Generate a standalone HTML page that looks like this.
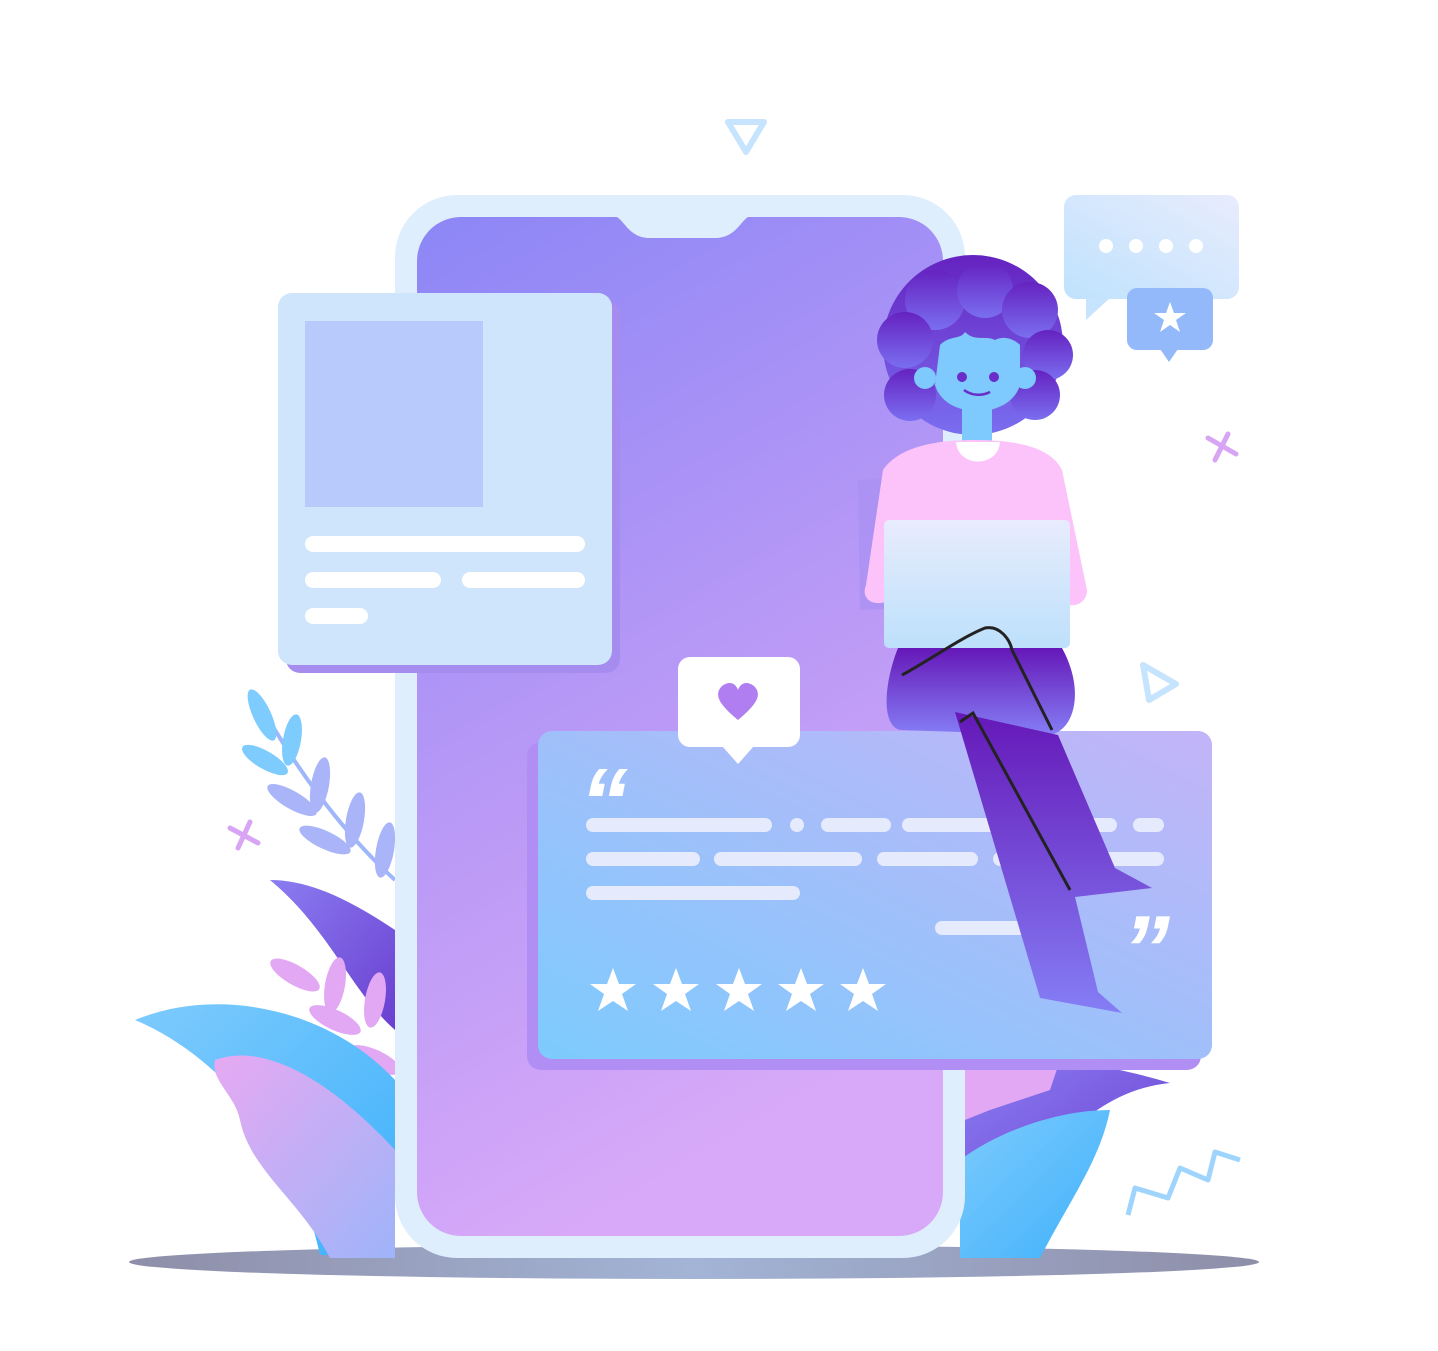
<!DOCTYPE html>
<html><head><meta charset="utf-8"><style>html,body{margin:0;padding:0;background:#fff}svg{display:block}</style></head>
<body>
<svg width="1438" height="1351" viewBox="0 0 1438 1351" xmlns="http://www.w3.org/2000/svg">
<defs>
<linearGradient id="scr" x1="0" y1="0" x2="0.3" y2="1"><stop offset="0" stop-color="#8c86f6"/><stop offset="0.5" stop-color="#b497f6"/><stop offset="1" stop-color="#d8a9f8"/></linearGradient>
<linearGradient id="rev" x1="0" y1="1" x2="1" y2="0"><stop offset="0" stop-color="#7dcbfd"/><stop offset="1" stop-color="#c3b4f8"/></linearGradient>
<linearGradient id="shd" x1="0" y1="0" x2="1" y2="0"><stop offset="0" stop-color="#8e8ea8"/><stop offset="0.5" stop-color="#a3b4d6"/><stop offset="1" stop-color="#8e8ea8"/></linearGradient>
<linearGradient id="hair" x1="0" y1="0" x2="0" y2="1"><stop offset="0" stop-color="#6522c0"/><stop offset="1" stop-color="#7a6ef0"/></linearGradient>
<linearGradient id="leg" x1="0" y1="0" x2="0" y2="1"><stop offset="0" stop-color="#6518b8"/><stop offset="1" stop-color="#857ef5"/></linearGradient>
<linearGradient id="lap" x1="0" y1="0" x2="0" y2="1"><stop offset="0" stop-color="#e8ecfd"/><stop offset="1" stop-color="#bde0fb"/></linearGradient>
<linearGradient id="chat" x1="0" y1="1" x2="1" y2="0"><stop offset="0" stop-color="#bfe2fd"/><stop offset="1" stop-color="#e8ecfd"/></linearGradient>
<linearGradient id="pl1" x1="0" y1="0" x2="1" y2="1"><stop offset="0" stop-color="#7ecbfd"/><stop offset="1" stop-color="#3fb1fb"/></linearGradient>
<linearGradient id="pl2" x1="0" y1="0" x2="1" y2="1"><stop offset="0" stop-color="#e6a9f2"/><stop offset="1" stop-color="#9fb4f9"/></linearGradient>
<linearGradient id="pl3" x1="0" y1="0" x2="1" y2="1"><stop offset="0" stop-color="#8b7df2"/><stop offset="1" stop-color="#6a3fd0"/></linearGradient>
</defs>
<ellipse cx="694" cy="1262" rx="565" ry="17" fill="url(#shd)"/>
<!-- left plants: leafy branch -->
<path d="M258 700 C290 760 340 830 395 880" stroke="#9fb6fa" stroke-width="4" fill="none"/>
<g fill="#7ecbfd">
<ellipse cx="262" cy="715" rx="9" ry="28" transform="rotate(-25 262 715)"/>
<ellipse cx="292" cy="740" rx="9" ry="26" transform="rotate(10 292 740)"/>
<ellipse cx="265" cy="760" rx="9" ry="26" transform="rotate(-60 265 760)"/>
</g>
<g fill="#a9b5f8">
<ellipse cx="320" cy="785" rx="9" ry="28" transform="rotate(10 320 785)"/>
<ellipse cx="292" cy="800" rx="9" ry="28" transform="rotate(-60 292 800)"/>
<ellipse cx="355" cy="820" rx="9" ry="28" transform="rotate(10 355 820)"/>
<ellipse cx="325" cy="840" rx="9" ry="28" transform="rotate(-65 325 840)"/>
<ellipse cx="385" cy="850" rx="9" ry="28" transform="rotate(10 385 850)"/>
</g>
<path d="M270 880 C310 880 350 900 395 930 L395 1030 C350 990 330 930 270 880Z" fill="url(#pl3)"/>
<g fill="#e2a8f3">
<ellipse cx="295" cy="975" rx="10" ry="28" transform="rotate(-60 295 975)"/>
<ellipse cx="335" cy="985" rx="10" ry="28" transform="rotate(10 335 985)"/>
<ellipse cx="335" cy="1020" rx="10" ry="28" transform="rotate(-65 335 1020)"/>
<ellipse cx="375" cy="1000" rx="10" ry="28" transform="rotate(10 375 1000)"/>
<ellipse cx="375" cy="1060" rx="10" ry="28" transform="rotate(-65 375 1060)"/>
</g>
<path d="M135 1020 C220 985 330 1010 395 1080 L395 1255 L320 1255 C300 1160 230 1060 135 1020Z" fill="url(#pl1)"/>
<path d="M215 1060 C270 1040 340 1090 395 1150 L395 1258 L330 1258 C300 1200 250 1170 240 1120 C235 1095 210 1080 215 1060Z" fill="url(#pl2)"/>
<!-- right plants -->
<path d="M960 1080 C1000 1060 1060 1050 1170 1083 C1100 1090 1060 1140 1000 1200 L960 1210Z" fill="url(#pl3)"/>
<path d="M960 1160 C1000 1130 1060 1110 1110 1110 C1100 1160 1070 1200 1040 1258 L960 1258Z" fill="url(#pl1)"/>
<path d="M965 1065 L1060 1060 L1050 1090 L990 1110 L965 1120Z" fill="#e2a8f3"/>
<!-- phone -->
<rect x="395" y="195" width="570" height="1063" rx="62" fill="#dfeefd"/>
<rect x="417" y="217" width="526" height="1019" rx="44" fill="url(#scr)"/>
<path d="M617 217 L748 217 C740 222 735 238 715 238 L650 238 C630 238 625 222 617 217Z" fill="#dfeefd"/>
<!-- left card -->
<rect x="286" y="301" width="334" height="372" rx="14" fill="#a78cf0"/>
<rect x="278" y="293" width="334" height="372" rx="14" fill="#cfe5fc"/>
<rect x="305" y="321" width="178" height="186" fill="#b8cafc"/>
<g stroke="#fff" stroke-width="16" stroke-linecap="round">
<line x1="313" y1="544" x2="577" y2="544"/><line x1="313" y1="580" x2="433" y2="580"/><line x1="470" y1="580" x2="577" y2="580"/><line x1="313" y1="616" x2="360" y2="616"/>
</g>
<!-- review card -->
<rect x="527" y="742" width="674" height="328" rx="14" fill="#b08ef3"/>
<rect x="538" y="731" width="674" height="328" rx="14" fill="url(#rev)"/>
<g stroke="#e5ebfd" stroke-width="14" stroke-linecap="round">
<line x1="593" y1="825" x2="765" y2="825"/><line x1="797" y1="825" x2="797" y2="825"/><line x1="828" y1="825" x2="884" y2="825"/><line x1="909" y1="825" x2="1110" y2="825"/><line x1="1140" y1="825" x2="1157" y2="825"/>
<line x1="593" y1="859" x2="693" y2="859"/><line x1="721" y1="859" x2="855" y2="859"/><line x1="884" y1="859" x2="971" y2="859"/><line x1="1000" y1="859" x2="1157" y2="859"/>
<line x1="593" y1="893" x2="793" y2="893"/><line x1="942" y1="928" x2="1030" y2="928"/>
</g>
<text x="580" y="835" font-family="Liberation Sans, sans-serif" font-size="96" font-style="italic" font-weight="bold" fill="#fff">“</text>
<text x="1122" y="982" font-family="Liberation Sans, sans-serif" font-size="96" font-style="italic" font-weight="bold" fill="#fff">”</text>
<g fill="#fff">
<g id="st"><polygon points="613,968 619,984 636,984 622,994 628,1011 613,1001 598,1011 604,994 590,984 607,984"/></g>
<use href="#st" x="63"/><use href="#st" x="126"/><use href="#st" x="188"/><use href="#st" x="250"/>
</g>
<!-- heart bubble -->
<rect x="678" y="657" width="122" height="90" rx="12" fill="#fff"/>
<polygon points="722,746 754,746 738,764" fill="#fff"/>
<path d="M738 720 C720 705 713 695 722 686 C730 680 736 684 738 690 C740 684 746 680 754 686 C763 695 756 705 738 720Z" fill="#b07ef0"/>
<!-- woman -->
<path d="M868 470 L1060 460 L1085 590 L870 600Z" fill="#a68ff2" opacity="0.6" transform="translate(-10,10)"/>
<g fill="url(#hair)">
<circle cx="973" cy="345" r="90"/><circle cx="935" cy="300" r="30"/><circle cx="985" cy="290" r="28"/><circle cx="1030" cy="310" r="28"/><circle cx="905" cy="340" r="28"/><circle cx="1048" cy="355" r="25"/><circle cx="910" cy="395" r="26"/><circle cx="1035" cy="395" r="25"/>
</g>
<circle cx="925" cy="378" r="11" fill="#7ec9fd"/><circle cx="1025" cy="378" r="11" fill="#7ec9fd"/>
<path d="M940 345 C950 335 960 340 965 332 C975 342 985 335 995 340 C1005 335 1015 340 1020 345 L1020 385 C1010 420 945 420 935 385Z" fill="#7ec9fd"/>
<rect x="962" y="405" width="30" height="45" fill="#7ec9fd"/>
<circle cx="962" cy="377" r="5" fill="#6a2dc9"/><circle cx="994" cy="377" r="5" fill="#6a2dc9"/>
<path d="M964 390 C972 396 982 396 990 392" stroke="#6a2dc9" stroke-width="2.5" fill="none"/>
<path d="M883 470 C900 445 940 440 975 440 C1010 440 1050 445 1062 470 L1087 590 C1087 605 1070 610 1060 600 L890 600 C875 608 860 600 866 585Z" fill="#fcc3fb"/>
<path d="M956 442 C958 468 998 468 1000 442Z" fill="#fff"/>
<rect x="884" y="520" width="186" height="128" rx="5" fill="url(#lap)"/>
<path d="M898 648 L1062 648 C1085 690 1075 730 1050 735 L900 730 C880 725 885 680 898 648Z" fill="url(#leg)"/>
<polygon points="955,712 1058,735 1115,868 1152,888 1075,897 1098,992 1122,1013 1040,998" fill="url(#leg)"/>
<path d="M902 675 C930 660 960 638 985 628 C1000 625 1010 640 1012 650 L1052 730" stroke="#222" stroke-width="3" fill="none"/>
<path d="M960 722 L973 713 L1070 890" stroke="#222" stroke-width="3" fill="none"/>
<!-- chat bubbles -->
<rect x="1064" y="195" width="175" height="104" rx="12" fill="url(#chat)"/>
<polygon points="1086,298 1086,320 1110,298" fill="#c6e4fd"/>
<g fill="#fff"><circle cx="1106" cy="246" r="7"/><circle cx="1136" cy="246" r="7"/><circle cx="1166" cy="246" r="7"/><circle cx="1196" cy="246" r="7"/></g>
<rect x="1127" y="288" width="86" height="62" rx="10" fill="#93b9fb"/>
<polygon points="1160,349 1178,349 1169,362" fill="#93b9fb"/>
<polygon points="1170,302 1174,313 1186,313 1176,320 1180,332 1170,325 1160,332 1164,320 1154,313 1166,313" fill="#fff"/>
<!-- decorations -->
<polygon points="728,122 764,122 746,152" fill="none" stroke="#c6e4fd" stroke-width="6" stroke-linejoin="round"/>
<polygon points="1143,665 1176,684 1149,700" fill="none" stroke="#c6e4fd" stroke-width="6" stroke-linejoin="round"/>
<g stroke="#d7a5f3" stroke-width="5" stroke-linecap="round"><line x1="1208" y1="438" x2="1236" y2="454"/><line x1="1228" y1="434" x2="1215" y2="460"/><line x1="230" y1="828" x2="258" y2="843"/><line x1="250" y1="822" x2="238" y2="848"/></g>
<polyline points="1128,1215 1135,1188 1168,1198 1180,1168 1208,1180 1215,1152 1240,1160" fill="none" stroke="#9fd5fd" stroke-width="5" stroke-linejoin="round"/>
</svg>
</body></html>
